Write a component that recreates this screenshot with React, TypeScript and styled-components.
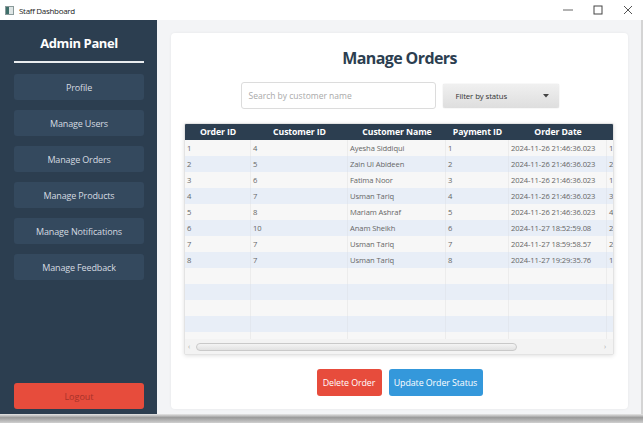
import React from "react";
import styled, { createGlobalStyle } from "styled-components";

const Global = createGlobalStyle`
  html, body { margin: 0; padding: 0; background: #ffffff; }
  body { font-family: "Open Sans", "Noto Sans", sans-serif; }
  * { box-sizing: border-box; }
`;

const Window = styled.div`
  width: 643px;
  height: 423px;
  display: flex;
  flex-direction: column;
  overflow: hidden;
  background: #fff;
`;

const TitleBar = styled.div`
  height: 20px;
  display: flex;
  align-items: center;
  padding-left: 5px;
  background: #ffffff;
  flex-shrink: 0;
`;

const AppIcon = styled.div`
  width: 9px;
  height: 9px;
  border: 1px solid #8a9a9a;
  background: linear-gradient(90deg, #3f6f6a 0 45%, #dfe6e6 45%);
  margin-right: 5px;
`;

const TitleText = styled.span`
  font-size: 8px;
  letter-spacing: -0.3px;
  color: #222;
  flex: 1;
`;

const WinControls = styled.div`
  display: flex;
  align-items: center;
  height: 20px;
`;

const WinButton = styled.div`
  width: 30px;
  height: 20px;
  display: flex;
  align-items: center;
  justify-content: center;
`;

const Body = styled.div`
  flex: 1;
  display: flex;
  min-height: 0;
  border-right: 2px solid #d4d4d4;
`;

const Sidebar = styled.div`
  width: 157px;
  background: #2c3e50;
  display: flex;
  flex-direction: column;
  padding: 14px 13px 5px 14px;
`;

const Brand = styled.div`
  color: #ffffff;
  font-weight: 700;
  font-size: 13px;
  letter-spacing: -0.4px;
  text-align: center;
  padding-bottom: 9px;
  border-bottom: 2.5px solid #e9ecef;
  margin-bottom: 11px;
`;

const NavList = styled.div`
  display: flex;
  flex-direction: column;
  gap: 10px;
`;

const NavButton = styled.div`
  height: 26px;
  border-radius: 3px;
  background: #34495e;
  color: #d5dbe1;
  font-size: 9px;
  letter-spacing: -0.15px;
  display: flex;
  align-items: center;
  justify-content: center;
`;

const Spacer = styled.div`
  flex: 1;
`;

const LogoutButton = styled.div`
  height: 26px;
  border-radius: 3px;
  background: #e74c3c;
  color: #a8322a;
  font-size: 9px;
  display: flex;
  align-items: center;
  justify-content: center;
`;

const Main = styled.div`
  flex: 1;
  background: #f3f4f6;
  padding: 13px 13px 5px 14px;
  display: flex;
`;

const Card = styled.div`
  flex: 1;
  background: #ffffff;
  border-radius: 4px;
  box-shadow: 0 0 3px rgba(0, 0, 0, 0.06);
  display: flex;
  flex-direction: column;
  align-items: center;
  padding: 13px 13px 0 13px;
`;

const Heading = styled.h1`
  margin: 0;
  font-size: 16px;
  letter-spacing: -0.6px;
  font-weight: 700;
  color: #2c3e50;
  line-height: 24px;
`;

const FilterRow = styled.div`
  display: flex;
  gap: 7px;
  align-items: center;
  margin-top: 12px;
`;

const SearchBox = styled.div`
  width: 195px;
  height: 27px;
  border: 1px solid #dcdcdc;
  border-radius: 3px;
  background: #fff;
  color: #a9a9a9;
  font-size: 8.5px;
  display: flex;
  align-items: center;
  padding-left: 7px;
`;

const Select = styled.div`
  width: 116px;
  height: 24px;
  border-radius: 2px;
  background: linear-gradient(#f0f0f0, #dedede);
  box-shadow: 0 0 1px rgba(0, 0, 0, 0.3);
  color: #333;
  font-size: 7.8px;
  letter-spacing: -0.1px;
  display: flex;
  align-items: center;
  justify-content: space-between;
  padding: 0 10px 0 13px;
`;

const Table = styled.div`
  margin: 14px 0 0 0;
  width: 430px;
  height: 232px;
  align-self: flex-start;
  display: flex;
  flex-direction: column;
  border: 1px solid #e3e3e3;
  border-radius: 2px;
  box-shadow: 0 1px 4px rgba(0, 0, 0, 0.12);
  overflow: hidden;
  background: #f7f7f7;
`;

const Rows = styled.div`
  flex: 1;
  overflow: hidden;
`;

const Grid = styled.div`
  display: grid;
  grid-template-columns: 66px 97px 98px 63px 98px 80px;
  width: 502px;
`;

const HeadCell = styled.div`
  height: 16px;
  background: #2c3e50;
  color: #ffffff;
  font-weight: 700;
  font-size: 8.7px;
  letter-spacing: -0.1px;
  display: flex;
  align-items: center;
  justify-content: center;
  white-space: nowrap;
`;

const Cell = styled.div<{ $alt: boolean }>`
  height: 16px;
  background: ${(p) => (p.$alt ? "#e8eef7" : "#f7f7f7")};
  color: #666;
  font-size: 7.6px;
  letter-spacing: -0.1px;
  display: flex;
  align-items: center;
  padding-left: 2px;
  white-space: nowrap;
  border-right: 1px solid ${(p) => (p.$alt ? "#e2e7ef" : "#ececec")};
`;

const ScrollBar = styled.div`
  height: 15px;
  flex-shrink: 0;
  background: #f3f3f3;
  display: flex;
  align-items: center;
  padding: 0 3px;
  gap: 2px;
`;

const Arrow = styled.span`
  font-size: 7px;
  color: #aaa;
  width: 6px;
`;

const Track = styled.div`
  flex: 1;
  height: 8px;
`;

const Thumb = styled.div`
  height: 8px;
  width: 321px;
  border-radius: 4px;
  border: 1px solid #c9c9c9;
  background: linear-gradient(#f4f4f4, #e2e2e2);
`;

const Actions = styled.div`
  display: flex;
  gap: 7px;
  margin-top: 14px;
`;

const ActionButton = styled.div<{ $color: string; $w: number }>`
  width: ${(p) => p.$w}px;
  height: 27px;
  border-radius: 3px;
  background: ${(p) => p.$color};
  color: #ffffff;
  font-size: 8.9px;
  letter-spacing: -0.1px;
  display: flex;
  align-items: center;
  justify-content: center;
`;

const BottomStrip = styled.div`
  height: 9px;
  flex-shrink: 0;
  background: linear-gradient(#e6e6e6, #9a9a9a 40%, #cfcfcf);
`;

const orders = [
  ["1", "4", "Ayesha Siddiqui", "1", "2024-11-26 21:46:36.023", "1000.0"],
  ["2", "5", "Zain Ul Abideen", "2", "2024-11-26 21:46:36.023", "2500.0"],
  ["3", "6", "Fatima Noor", "3", "2024-11-26 21:46:36.023", "1500.0"],
  ["4", "7", "Usman Tariq", "4", "2024-11-26 21:46:36.023", "3000.0"],
  ["5", "8", "Mariam Ashraf", "5", "2024-11-26 21:46:36.023", "4000.0"],
  ["6", "10", "Anam Sheikh", "6", "2024-11-27 18:52:59.08", "2000.0"],
  ["7", "7", "Usman Tariq", "7", "2024-11-27 18:59:58.57", "2200.0"],
  ["8", "7", "Usman Tariq", "8", "2024-11-27 19:29:35.76", "1400.0"],
];

const headers = ["Order ID", "Customer ID", "Customer Name", "Payment ID", "Order Date", "Total"];
const nav = ["Profile", "Manage Users", "Manage Orders", "Manage Products", "Manage Notifications", "Manage Feedback"];

export default function App() {
  const emptyRows = 5;
  const rows = [...orders, ...Array.from({ length: emptyRows }, () => ["", "", "", "", "", ""])];
  return (
    <Window>
      <Global />
      <TitleBar>
        <AppIcon />
        <TitleText>Staff Dashboard</TitleText>
        <WinControls>
          <WinButton>
            <svg width="10" height="10" viewBox="0 0 10 10">
              <line x1="0" y1="5" x2="10" y2="5" stroke="#666" strokeWidth="1" />
            </svg>
          </WinButton>
          <WinButton>
            <svg width="10" height="10" viewBox="0 0 10 10">
              <rect x="1" y="1" width="8" height="8" fill="none" stroke="#444" strokeWidth="1" />
            </svg>
          </WinButton>
          <WinButton>
            <svg width="10" height="10" viewBox="0 0 10 10">
              <path d="M1 1 L9 9 M9 1 L1 9" stroke="#555" strokeWidth="1" />
            </svg>
          </WinButton>
        </WinControls>
      </TitleBar>
      <Body>
        <Sidebar>
          <Brand>Admin Panel</Brand>
          <NavList>
            {nav.map((n) => (
              <NavButton key={n}>{n}</NavButton>
            ))}
          </NavList>
          <Spacer />
          <LogoutButton>Logout</LogoutButton>
        </Sidebar>
        <Main>
          <Card>
            <Heading>Manage Orders</Heading>
            <FilterRow>
              <SearchBox>Search by customer name</SearchBox>
              <Select>
                <span>Filter by status</span>
                <svg width="6" height="4" viewBox="0 0 6 4">
                  <path d="M0 0 L6 0 L3 3.5 Z" fill="#444" />
                </svg>
              </Select>
            </FilterRow>
            <Table>
              <Rows>
                <Grid>
                  {headers.map((h) => (
                    <HeadCell key={h}>{h}</HeadCell>
                  ))}
                  {rows.map((r, i) =>
                    r.map((c, j) => (
                      <Cell key={`${i}-${j}`} $alt={i % 2 === 1}>
                        {c}
                      </Cell>
                    ))
                  )}
                </Grid>
              </Rows>
              <ScrollBar>
                <Arrow>‹</Arrow>
                <Track>
                  <Thumb />
                </Track>
                <Arrow>›</Arrow>
              </ScrollBar>
            </Table>
            <Actions>
              <ActionButton $color="#e74c3c" $w={65}>Delete Order</ActionButton>
              <ActionButton $color="#3498db" $w={94}>Update Order Status</ActionButton>
            </Actions>
          </Card>
        </Main>
      </Body>
      <BottomStrip />
    </Window>
  );
}
